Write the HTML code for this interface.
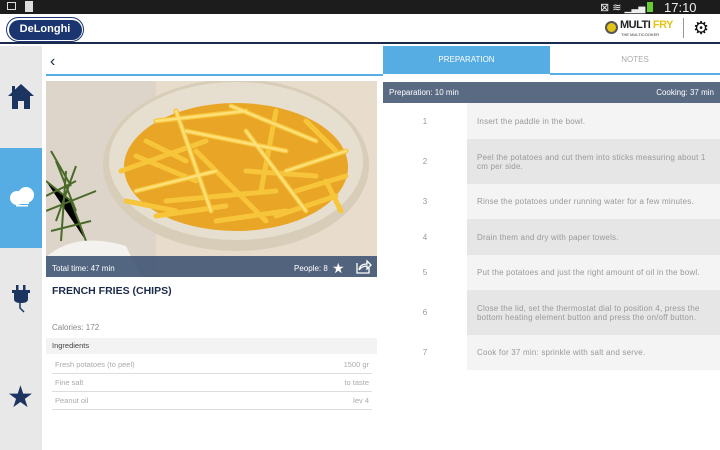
<!DOCTYPE html>
<html><head><meta charset="utf-8"><style>
*{margin:0;padding:0;box-sizing:border-box}
body{width:720px;height:450px;overflow:hidden;background:#fff;font-family:"Liberation Sans",sans-serif;position:relative}
.abs{position:absolute}
.st{left:0;top:0;width:720px;height:14px;background:#1c1c1c}
.hdr{left:0;top:14px;width:720px;height:30px;background:#fff;border-bottom:2px solid #1b2a4a}
.side{left:0;top:46px;width:42px;height:404px;background:#e8e8e8}
.steps div{position:absolute;left:383px;width:337px;font-size:8px;color:#999}
.num{position:absolute;left:0;width:84px;text-align:center}
.txt{position:absolute;left:84px;right:0;top:0;bottom:0;padding:0 10px;display:flex;align-items:center;line-height:9px;letter-spacing:.2px}
.ing{position:absolute;left:52px;width:320px;height:18px;border-bottom:1px solid #ddd;font-size:7.5px;color:#aaa;line-height:18px;padding:0 3px}
.ing span{float:right}
</style></head><body>
<div class="abs st"></div>
<div class="abs" style="left:7px;top:2px;width:9px;height:8px;border:1.5px solid #ddd"></div>
<div class="abs" style="left:25px;top:1px;width:8px;height:11px;background:#ddd"></div>
<div class="abs" style="left:600px;top:1px;color:#eee;font-size:11px">⊠ ≋ <span style="font-size:9px">▁▃▅</span><span style="display:inline-block;width:6px;height:10px;background:#6c3;vertical-align:-1px;margin-left:2px"></span></div>
<div class="abs" style="left:664px;top:0px;color:#eee;font-size:13px">17:10</div>
<div class="abs hdr"></div>
<div class="abs" style="left:6px;top:17px;width:78px;height:25px;border:1.5px solid #1b3570;border-radius:13px;padding:1.5px"><div style="width:100%;height:100%;background:#1b3570;border-radius:11px;color:#fff;font-weight:bold;font-size:11px;text-align:center;line-height:19px">DeLonghi</div></div>
<div class="abs" style="left:605px;top:21px;width:13px;height:13px;border-radius:50%;background:#e5c316;border:2px solid #555"></div>
<div class="abs" style="left:620px;top:19px;font-size:11px;font-weight:bold;color:#222;letter-spacing:-.5px">MULTI <span style="color:#e5c316">FRY</span></div>
<div class="abs" style="left:621px;top:32px;font-size:4px;color:#333">THE MULTICOOKER</div>
<div class="abs" style="left:683px;top:18px;width:1px;height:20px;background:#999"></div>
<div class="abs" style="left:693px;top:18px;font-size:18px;color:#111;line-height:20px">⚙</div>

<div class="abs side"></div>
<div class="abs" style="left:0;top:148px;width:42px;height:100px;background:#55ade3"></div>
<svg class="abs" style="left:8px;top:83px" width="26" height="27" viewBox="0 0 26 27"><path d="M13 1 L26 13 H22 V26 H16 V18 H10 V26 H4 V13 H0 Z M4 3 H7 V7 L4 10Z" fill="#1b3560"/></svg>
<svg class="abs" style="left:7px;top:185px" width="28" height="24" viewBox="0 0 28 24"><circle cx="10" cy="13" r="7" fill="#fff"/><circle cx="19" cy="10" r="8" fill="#fff"/><rect x="8" y="14" width="14" height="5" fill="#fff"/><rect x="9" y="20" width="12" height="1.5" fill="#fff"/></svg>
<svg class="abs" style="left:12px;top:285px" width="18" height="28" viewBox="0 0 18 28"><rect x="4" y="0" width="2.5" height="7" fill="#1b3560"/><rect x="11" y="0" width="2.5" height="7" fill="#1b3560"/><rect x="0" y="5" width="18" height="3" fill="#1b3560"/><path d="M2 8 H16 V14 Q16 18 9 18 Q2 18 2 14Z" fill="#1b3560"/><path d="M8 18 V23 L12 27" stroke="#1b3560" stroke-width="1.5" fill="none"/></svg>
<div class="abs" style="left:7px;top:381px;font-size:30px;color:#1b3560;line-height:34px">★</div>

<div class="abs" style="left:50px;top:53px;font-size:16px;color:#1b2a4a;line-height:18px">‹</div>
<div class="abs" style="left:46px;top:74px;width:337px;height:2px;background:#55ade3"></div>
<div class="abs" style="left:383px;top:46px;width:167px;height:28px;background:#55ade3;color:#fff;font-size:8px;text-align:center;line-height:28px">PREPARATION</div>
<div class="abs" style="left:550px;top:46px;width:170px;height:28px;color:#aaa;font-size:8px;text-align:center;line-height:28px">NOTES</div>
<div class="abs" style="left:550px;top:73px;width:170px;height:2px;background:#55ade3"></div>

<svg class="abs" style="left:46px;top:81px" width="331" height="196" viewBox="0 0 331 196">
<rect width="331" height="196" fill="#e8ddcc"/>
<rect x="0" y="0" width="110" height="196" fill="#ddd5c9"/>
<ellipse cx="190" cy="84" rx="133" ry="86" fill="#d8cdb9"/>
<ellipse cx="190" cy="80" rx="127" ry="79" fill="#e6dfcf"/>
<ellipse cx="190" cy="86" rx="112" ry="64" fill="#e9a526"/>
<g stroke="#f7c53a" stroke-width="5" stroke-linecap="round">
<path d="M75 90 L160 60 M110 40 L200 30 M120 120 L230 110 M185 25 L270 60 M150 70 L220 140 M200 50 L260 130 M240 90 L300 70 M90 110 L170 90 M130 30 L165 130 M230 30 L215 110 M250 110 L300 95 M170 140 L240 130 M100 60 L140 80 M260 40 L290 70 M80 120 L130 130 M280 100 L295 130 M140 50 L240 70 M90 75 L150 100 M200 90 L270 95 M110 135 L180 125 M230 135 L290 115"/>
</g>
<g stroke="#fde07a" stroke-width="2.5" stroke-linecap="round">
<path d="M110 40 L200 30 M185 25 L270 60 M200 50 L260 130 M90 110 L170 90 M130 30 L165 130 M140 50 L240 70 M240 90 L300 70"/>
</g>
<g stroke="#4a6a2a" stroke-width="2"><path d="M0 100 L25 120 L40 160 M10 80 L30 130 M0 130 L50 110 M5 150 L45 140 M20 90 L15 160 M0 115 L30 100 M5 70 L25 105 M30 85 L10 140"/></g>
<path d="M0 176 Q30 150 80 165 L95 196 H0Z" fill="#f4f2ee"/>
<rect x="0" y="175" width="331" height="21" fill="#3c5272" opacity=".88"/>
<text x="6" y="190" fill="#fff" font-size="8" font-family="Liberation Sans">Total time: 47 min</text>
<text x="248" y="190" fill="#fff" font-size="8" font-family="Liberation Sans">People: 8</text>
<text x="286" y="192" fill="#fff" font-size="14" font-family="DejaVu Sans">★</text>
<path d="M311 182 V192 H323 V187 M313 189 Q314 183 321 183 V180 L325 184 L321 188 V185 Q316 185 313 189" stroke="#fff" stroke-width="1.3" fill="none"/>
</svg>

<div class="abs" style="left:52px;top:285px;font-size:10.5px;font-weight:bold;color:#1b2a4a">FRENCH FRIES (CHIPS)</div>
<div class="abs" style="left:52px;top:323px;font-size:8px;color:#888">Calories: 172</div>
<div class="abs" style="left:46px;top:338px;width:331px;height:16px;background:#f3f3f3;font-size:7.5px;color:#444;line-height:16px;padding-left:6px">Ingredients</div>
<div class="ing" style="top:356px">Fresh potatoes (to peel)<span>1500 gr</span></div>
<div class="ing" style="top:374px">Fine salt<span>to taste</span></div>
<div class="ing" style="top:392px">Peanut oil<span>lev 4</span></div>

<div class="abs" style="left:383px;top:82px;width:337px;height:21px;background:#5a6a83;color:#fff;font-size:8px;line-height:21px;padding:0 6px">Preparation: 10 min<span style="float:right">Cooking: 37 min</span></div>
<div class="steps">
<div style="top:103px;height:36px"><span class="num" style="top:14px">1</span><span class="txt" style="background:#f4f4f4">Insert the paddle in the bowl.</span></div>
<div style="top:139px;height:45px"><span class="num" style="top:18px">2</span><span class="txt" style="background:#e6e6e6">Peel the potatoes and cut them into sticks measuring about 1 cm per side.</span></div>
<div style="top:184px;height:35px"><span class="num" style="top:13px">3</span><span class="txt" style="background:#f4f4f4">Rinse the potatoes under running water for a few minutes.</span></div>
<div style="top:219px;height:36px"><span class="num" style="top:14px">4</span><span class="txt" style="background:#e6e6e6">Drain them and dry with paper towels.</span></div>
<div style="top:255px;height:35px"><span class="num" style="top:13px">5</span><span class="txt" style="background:#f4f4f4">Put the potatoes and just the right amount of oil in the bowl.</span></div>
<div style="top:290px;height:45px"><span class="num" style="top:18px">6</span><span class="txt" style="background:#e6e6e6">Close the lid, set the thermostat dial to position 4, press the bottom heating element button and press the on/off button.</span></div>
<div style="top:335px;height:35px"><span class="num" style="top:13px">7</span><span class="txt" style="background:#f4f4f4">Cook for 37 min: sprinkle with salt and serve.</span></div>
</div>
</body></html>
